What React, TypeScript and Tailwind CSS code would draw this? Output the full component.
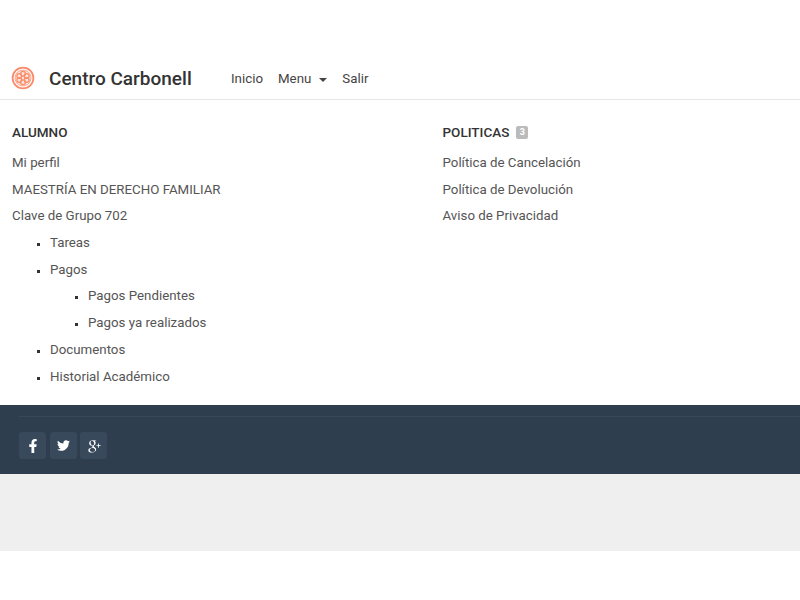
import { FaFacebookF, FaTwitter } from 'react-icons/fa';
import { TiSocialGooglePlus } from 'react-icons/ti';

function Logo() {
  return (
    <svg width="24" height="24" viewBox="0 0 24 24" fill="none" stroke="#f98b6a" className="shrink-0 -mt-[2px]">
      <circle cx="12" cy="12" r="10.4" strokeWidth="1.8" />
      <circle cx="12" cy="12" r="8" strokeWidth="0.7" fill="#fde3d8" />
      <circle cx="12" cy="7.8" r="2.4" strokeWidth="1.2" />
      <circle cx="12" cy="16.2" r="2.4" strokeWidth="1.2" />
      <circle cx="8.3" cy="10" r="2.4" strokeWidth="1.2" />
      <circle cx="15.7" cy="10" r="2.4" strokeWidth="1.2" />
      <circle cx="8.3" cy="14" r="2.4" strokeWidth="1.2" />
      <circle cx="15.7" cy="14" r="2.4" strokeWidth="1.2" />
    </svg>
  );
}

function Item({ children }: { children: React.ReactNode }) {
  return <li className="h-[26.7px] leading-[26.7px] marker:text-[#333] marker:text-[11px]">{children}</li>;
}

function Social({ children }: { children: React.ReactNode }) {
  return (
    <a className="w-[27px] h-[27px] flex items-center justify-center rounded-[3px] bg-[#38495c] text-white">
      {children}
    </a>
  );
}

export default function App() {
  return (
    <div className="min-h-[600px] bg-white font-['Roboto',sans-serif] text-[13.3px] text-[#555]">
      <div className="h-[59px]" />
      <nav className="h-[41px] flex items-center border-b border-[#e7e7e7]">
        <div className="w-[231px] flex items-center pl-[11px] gap-[14px]">
          <Logo />
          <span className="text-[19px] font-medium text-[#333]">Centro Carbonell</span>
        </div>
        <div className="flex items-center gap-[15px] text-[#444]">
          <span>Inicio</span>
          <span className="flex items-center">
            Menu
            <span className="ml-[8px] mt-[1px] border-x-4 border-t-4 border-x-transparent border-t-[#444]" />
          </span>
          <span>Salir</span>
        </div>
      </nav>
      <main className="h-[305px] flex pt-[19px] pl-[12px]">
        <section className="w-[430.5px]">
          <h4 className="h-[26px] leading-[26px] font-medium text-[13.5px] text-[#333]">ALUMNO</h4>
          <div className="pt-[5px]">
            <div className="h-[26.7px] leading-[26.7px]">Mi perfil</div>
            <div className="h-[26.7px] leading-[26.7px]">MAESTRÍA EN DERECHO FAMILIAR</div>
            <div className="h-[26.7px] leading-[26.7px]">Clave de Grupo 702</div>
            <ul className="list-[square] pl-[38px]">
              <Item>Tareas</Item>
              <Item>Pagos</Item>
              <ul className="list-[square] pl-[38px]">
                <Item>Pagos Pendientes</Item>
                <Item>Pagos ya realizados</Item>
              </ul>
              <Item>Documentos</Item>
              <Item>Historial Académico</Item>
            </ul>
          </div>
        </section>
        <section>
          <h4 className="h-[26px] flex items-center gap-[7px] font-medium text-[13.5px] text-[#333]">
            POLITICAS
            <span className="w-[12px] h-[13px] mt-[1px] flex items-center justify-center rounded-[2px] bg-[#bbb] text-white text-[9px] font-bold">3</span>
          </h4>
          <div className="pt-[5px]">
            <div className="h-[26.7px] leading-[26.7px]">Política de Cancelación</div>
            <div className="h-[26.7px] leading-[26.7px]">Política de Devolución</div>
            <div className="h-[26.7px] leading-[26.7px]">Aviso de Privacidad</div>
          </div>
        </section>
      </main>
      <footer className="h-[69px] bg-[#2f3e4f] pl-[19px] pt-[11px]">
        <div className="border-t border-[#374859]" />
        <div className="flex gap-[3.5px] pt-[15px]">
          <Social><FaFacebookF size={14} /></Social>
          <Social><FaTwitter size={13} /></Social>
          <Social><TiSocialGooglePlus size={20} /></Social>
        </div>
      </footer>
      <div className="h-[77px] bg-[#efefef]" />
    </div>
  );
}
